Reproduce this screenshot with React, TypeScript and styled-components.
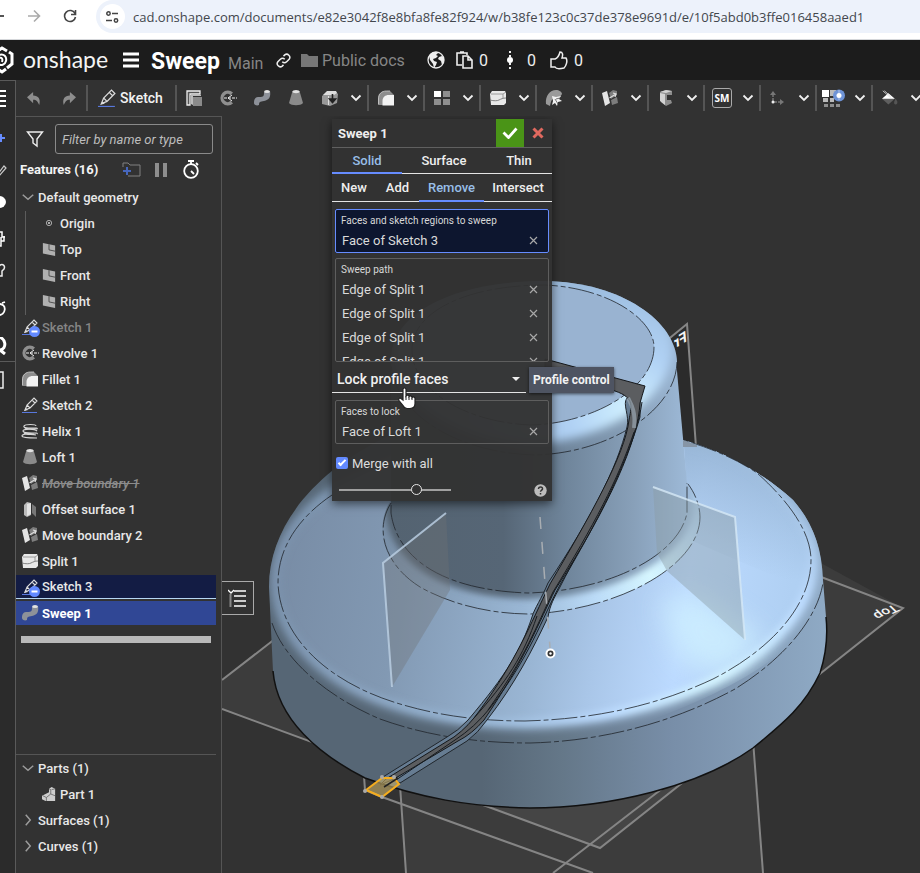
import React from "react";
import styled, { createGlobalStyle, css } from "styled-components";

const Global = createGlobalStyle`
  *, *::before, *::after { box-sizing: border-box; }
  html, body, #root { height: 100%; }
  body {
    margin: 0;
    background: #323232;
    color: #eee;
    font-family: Roboto, "Liberation Sans", sans-serif;
    font-size: 13px;
    overflow: hidden;
  }
  button, input, select { font: inherit; color: inherit; }
  button { background: none; border: 0; padding: 0; cursor: pointer; }
  ul { list-style: none; margin: 0; padding: 0; }
  svg { display: block; flex: none; }
`;

const Page = styled.div`
  display: flex;
  flex-direction: column;
  height: 100vh;
  overflow: hidden;
`;

/* ---------- browser bar ---------- */
const BrowserBar = styled.div`
  display: flex;
  align-items: flex-start;
  flex: none;
  height: 40px;
  background: #fff;
  border-bottom: 1px solid #d5d7da;
  color: #5b5d60;
`;
const BrowserNav = styled.nav`
  display: flex;
  align-items: center;
  flex: none;
  width: 96px;
  height: 32px;
  gap: 22px;
`;
const AddressPill = styled.div`
  display: flex;
  align-items: center;
  flex: 1;
  min-width: 0;
  height: 33px;
  padding-left: 4px;
  gap: 8px;
  background: #edf2fb;
  border-radius: 17px 0 0 17px;
`;
const SiteInfo = styled.button`
  display: grid;
  place-items: center;
  flex: none;
  width: 25px;
  height: 25px;
  border-radius: 50%;
  background: #fff;
`;
const Address = styled.input`
  flex: 1;
  min-width: 0;
  border: 0;
  padding: 0;
  background: none;
  outline: none;
  color: #43474d;
  font: 13px "Open Sans", "Noto Sans", sans-serif;
`;

/* ---------- document header ---------- */
const DocHeader = styled.header`
  display: flex;
  align-items: center;
  flex: none;
  height: 40px;
  background: #1c1c1c;
  white-space: nowrap;
`;
const Wordmark = styled.span`
  width: 100px;
  padding-left: 7px;
  font: 23px/30px Lato, sans-serif;
  height: 32px;
  color: #f4f4f4;
`;
const MenuButton = styled.button`
  display: flex;
  width: 28px;
`;
const DocTitle = styled.h1`
  width: 77px;
  margin: 0;
  padding-top: 3px;
  font-size: 23px;
  line-height: 28px;
  font-weight: 700;
  color: #fff;
`;
const HeaderLabel = styled.span<{ $w: number; $low?: boolean }>`
  width: ${(p) => p.$w}px;
  padding-top: ${(p) => (p.$low ? 7 : 2)}px;
  font-size: 16px;
  line-height: 24px;
  color: #868686;
`;
const HeaderIcon = styled.span<{ $w: number }>`
  display: flex;
  width: ${(p) => p.$w}px;
`;
const Count = styled.span<{ $w: number }>`
  width: ${(p) => p.$w}px;
  padding-top: 2px;
  font-size: 16px;
  line-height: 24px;
`;

/* ---------- body ---------- */
const Body = styled.div`
  display: flex;
  flex: 1;
  min-height: 0;
`;
const Rail = styled.nav`
  display: flex;
  flex-direction: column;
  flex: none;
  width: 16px;
  background: #2b2b2b;
  border-right: 1px solid #5a5a5a;
  border-top: 1px solid #5a5a5a;
`;
const RailItem = styled.button<{ $h: number; $line?: boolean }>`
  display: flex;
  align-items: center;
  justify-content: flex-start;
  width: 15px;
  height: ${(p) => p.$h}px;
  overflow: hidden;
  border-top: ${(p) => (p.$line ? "1px solid #5a5a5a" : "0")};
`;
const Workspace = styled.div`
  display: flex;
  flex-direction: column;
  flex: 1;
  min-width: 0;
`;
const Toolbar = styled.div`
  display: flex;
  flex: none;
  align-items: center;
  height: 36px;
  overflow: hidden;
`;
const ToolGroup = styled.div<{ $w: number; $first?: boolean }>`
  display: flex;
  align-items: center;
  flex: none;
  width: ${(p) => p.$w}px;
  height: 26px;
  border-left: ${(p) => (p.$first ? "0" : "2px solid #555")};
`;
const Tool = styled.button<{ $w: number }>`
  display: grid;
  place-items: center;
  flex: none;
  width: ${(p) => p.$w}px;
  height: 26px;
`;
const SketchButton = styled.button`
  display: flex;
  align-items: center;
  gap: 4px;
  padding-left: 10px;
  font-size: 14px;
  font-weight: 500;
  color: #f2f2f2;
`;
const SmBadge = styled.span`
  display: grid;
  place-items: center;
  width: 20px;
  height: 20px;
  border: 1px solid #aaa;
  border-radius: 3px;
  font: 700 10px/18px "Open Sans", sans-serif;
  color: #fff;
`;
const Main = styled.div`
  display: flex;
  flex: 1;
  min-height: 0;
`;

/* ---------- feature panel ---------- */
const FeaturePanel = styled.aside`
  display: flex;
  flex-direction: column;
  flex: none;
  width: 206px;
  border-top: 1px solid #555;
  border-right: 1px solid #555;
`;
const FilterRow = styled.div`
  display: flex;
  align-items: center;
  gap: 11px;
  padding: 7px 8px 0 10px;
`;
const FilterInput = styled.input`
  flex: 1;
  min-width: 0;
  height: 30px;
  padding: 0 6px;
  background: transparent;
  border: 1px solid #8a8a8a;
  border-radius: 3px;
  font-style: italic;
  &::placeholder { color: #bdbdbd; opacity: 1; }
`;
const PanelTitle = styled.div`
  display: flex;
  align-items: center;
  height: 31px;
  padding-left: 4px;
`;
const TitleText = styled.h2`
  width: 102px;
  margin: 0;
  font-size: 13px;
  line-height: 20px;
  font-weight: 700;
  color: #f4f4f4;
`;
const TitleAction = styled.button<{ $w: number }>`
  width: ${(p) => p.$w}px;
`;
const Row = styled.button<{ $level?: number; $tone?: "dim" | "struck" | "related" | "active" }>`
  display: flex;
  align-items: center;
  width: 200px;
  height: 24px;
  margin: 0 0 2px;
  gap: 4px;
  padding-left: ${(p) => (p.$level ?? 0) * 5 + 6}px;
  text-align: left;
  white-space: nowrap;
  font-weight: 500;
  color: #e8e8e8;
  ${(p) => p.$tone === "dim" && css`color: #858585;`}
  ${(p) => p.$tone === "struck" && css`color: #8c8c8c; font-style: italic; text-decoration: line-through;`}
  ${(p) => p.$tone === "related" && css`background: #131c44; border-bottom: 1px solid #b6d6f2;`}
  ${(p) => p.$tone === "active" && css`background: #304795; color: #fff; font-weight: 700;`}
`;
const Group = styled.ul`
  margin: 0 0 0 9px;
  border-left: 1px solid #5c5c5c;
`;
const RollbackBar = styled.div`
  height: 7px;
  margin: 9px 10px 0 5px;
  background: #b9b9b9;
`;
const PartsList = styled.ul`
  margin: auto 5px 13px 0;
  padding-top: 1px;
  border-top: 1px solid #555;
`;

/* ---------- viewport ---------- */
const Viewport = styled.main`
  position: relative;
  flex: 1;
  min-width: 0;
  overflow: hidden;
`;
const Scene = styled.svg`
  position: absolute;
  inset: 0;
  width: 100%;
  height: 100%;
`;
const ListToggle = styled.button`
  position: absolute;
  left: -1px;
  top: 465px;
  display: grid;
  place-items: center;
  width: 33px;
  height: 34px;
  background: #323232;
  border: 1px solid #aaa;
  border-left: 0;
`;
const Dialog = styled.section`
  position: absolute;
  left: 110px;
  top: 3px;
  width: 220px;
  background: rgba(50, 50, 50, 0.96);
  box-shadow: 0 3px 9px rgba(0, 0, 0, 0.55);
`;
const DialogHeader = styled.div`
  display: flex;
  align-items: center;
  height: 29px;
  padding-left: 6px;
  border-bottom: 1px solid #606060;
`;
const DialogTitle = styled.h2`
  flex: 1;
  margin: 0;
  font-size: 13px;
  font-weight: 700;
  color: #eee;
`;
const Confirm = styled.button`
  display: grid;
  place-items: center;
  width: 28px;
  height: 28px;
  background: #4a9417;
`;
const Cancel = styled(Confirm)`
  background: none;
`;
const Tabs = styled.div<{ $cols: string }>`
  display: grid;
  grid-template-columns: ${(p) => p.$cols};
  height: 26px;
  border-bottom: 1px solid #e4e4e4;
  & + & { height: 28px; }
`;
const Tab = styled.button<{ $on?: boolean }>`
  margin-bottom: -1px;
  font-weight: 500;
  color: ${(p) => (p.$on ? "#98bfe8" : "#eee")};
  border-bottom: 2px solid ${(p) => (p.$on ? "#668cff" : "transparent")};
`;
const Field = styled.fieldset<{ $on?: boolean; $h: number; $gap: number }>`
  height: ${(p) => p.$h}px;
  min-width: 0;
  margin: ${(p) => p.$gap}px 3px 0;
  padding: 5px 10px 0 5px;
  overflow: hidden;
  border: 1px solid ${(p) => (p.$on ? "#668cff" : "#5e5e5e")};
  border-radius: 2px;
  background: ${(p) => (p.$on ? "#0d162f" : "transparent")};
`;
const FieldLabel = styled.div`
  font-size: 10px;
  line-height: 12px;
  color: #d8d8d8;
`;
const Pick = styled.div`
  display: flex;
  align-items: center;
  justify-content: space-between;
  height: 24px;
  padding: 2px 0 0 1px;
  color: #dadada;
`;
const SelectRow = styled.label`
  display: flex;
  align-items: center;
  width: 194px;
  height: 27px;
  margin-top: 4px;
  padding-right: 6px;
  border-bottom: 1px solid #e4e4e4;
`;
const Select = styled.select`
  flex: 1;
  min-width: 0;
  padding: 0 0 0 5px;
  appearance: none;
  background: none;
  border: 0;
  outline: 0;
  font-size: 14px;
  font-weight: 500;
  color: #f0f0f0;
`;
const CheckRow = styled.label`
  display: flex;
  align-items: center;
  gap: 4px;
  height: 24px;
  margin-top: 7px;
  padding-left: 4px;
  color: #ddd;
`;
const Check = styled.input`
  display: grid;
  place-items: center;
  appearance: none;
  width: 12px;
  height: 12px;
  margin: 0;
  border-radius: 2px;
  background: #6289ff;
  &::after {
    content: "";
    width: 4px;
    height: 8px;
    margin-bottom: 2px;
    border: solid #fff;
    border-width: 0 2px 2px 0;
    transform: rotate(45deg);
  }
`;
const DialogFooter = styled.div`
  display: flex;
  align-items: center;
  justify-content: space-between;
  height: 22px;
  margin-top: 4px;
  padding: 0 5px 0 7px;
`;
const Slider = styled.input`
  appearance: none;
  width: 112px;
  height: 12px;
  margin: 0;
  background: none;
  &::-webkit-slider-runnable-track { height: 2px; background: #a0a0a0; }
  &::-webkit-slider-thumb {
    appearance: none;
    width: 11px;
    height: 11px;
    margin-top: -5px;
    border: 1px solid #e6e6e6;
    border-radius: 50%;
    background: #333;
  }
`;
const Tooltip = styled.div`
  position: absolute;
  left: 307px;
  top: 251px;
  padding: 4px;
  background: #4e5462;
  font-weight: 700;
  font-size: 12px;
  line-height: 18px;
  color: #f2f2f2;
  white-space: nowrap;
  box-shadow: 0 1px 3px rgba(0, 0, 0, 0.6);
`;
const Pointer = styled.svg`
  position: absolute;
  left: 176px;
  top: 271px;
`;

/* ---------- icons ---------- */
const shapes: Record<string, React.ReactNode> = {
  undo: <path d="M0 7 7 1v4c6 0 9 4 7 11-2-4-3-6-7-6v4z" fill="#8d8d8d" />,
  redo: <path d="M16 7 9 1v4C3 5 0 9 2 16c2-4 3-6 7-6v4z" fill="#8d8d8d" />,
  pencil: (
    <>
      <path d="M3 13 5 8 12 1l3 3-7 7zM5 8l3 3M10 3l3 3" fill="none" stroke="#ddd" strokeWidth="1.100" />
      <path d="m2 14 2-3 2 2z" fill="#ddd" />
      <path d="M0 15.500h15" stroke="#5878dd" />
    </>
  ),
  extrude: (
    <>
      <path d="M1 15V1h13v3H4v11z" fill="#555" stroke="#eee" strokeWidth="1.300" />
      <path d="M5 14V5h10v1H7v9z" fill="#bbb" />
      <path d="M7 7h9v9H7z" fill="#8a8a8a" />
    </>
  ),
  revolve: (
    <>
      <path d="M13 2.500A7.500 7.500 0 1 0 13 13.500L10.500 10.800A4 4 0 1 1 10.500 5.200z" fill="#8f8f8f" />
      <path d="M4 8h13" stroke="#eee" strokeWidth="1.200" strokeDasharray="3 1" />
      <path d="M8 8l4-3M8 8l4 3" stroke="#eee" />
    </>
  ),
  sweep: (
    <>
      <path d="M0 13c0-5 2-6 5-6 5 0 5-1 5-5l6-1c1 6-1 9-6 10-4 .5-5 1-5 4-2 1-5 0-5-2z" fill="#8d9199" />
      <ellipse cx="13" cy="1.600" rx="2.900" ry="1.500" fill="#e2e2e2" />
    </>
  ),
  loft: (
    <>
      <path d="M4.500 1h7L15 13c-2 3-12 3-14 0z" fill="#8a8a8a" />
      <ellipse cx="8" cy="1.600" rx="3.500" ry="1.600" fill="#e2e2e2" />
    </>
  ),
  thicken: (
    <>
      <path d="M0 6 5 2h9l2 2-1 9-7 3-8-2z" fill="#989898" />
      <path d="M1 5 5 1h9l1 2-3 2z" fill="#ddd" />
      <path d="M6.500 6v9" stroke="#ddd" />
      <path d="M10.500 4v7M7.500 9l3 3.500 3-3.500z" fill="#222" stroke="#222" strokeWidth="1.600" />
    </>
  ),
  fillet: (
    <>
      <path d="M0 15V9c0-5 3-8 8-8h4l4 4v10z" fill="#8d8d8d" />
      <path d="M4.500 15.500V11c0-4 3-6 6-6H16v10.500z" fill="#f2f2f2" />
      <path d="M.5 14V9c0-5 3-8 8-8H12" fill="none" stroke="#ccc" strokeWidth=".8" />
    </>
  ),
  pattern: (
    <>
      <path d="M0 1h7v6H0z" fill="#fff" />
      <path d="M9 1h7v6H9zM0 9h7v6H0zM9 9h7v6H9z" fill="#8e8e8e" />
    </>
  ),
  split: (
    <>
      <path d="M0 4 2 1h13l1 2v10l-2 2H1z" fill="#e8e8e8" />
      <path d="M1 4h12l3-2M13 4v4" fill="none" stroke="#888" strokeWidth=".8" />
      <path d="M0 10c4 1 7 1 9 0s4-2 7-2" fill="none" stroke="#777" strokeWidth=".9" />
    </>
  ),
  surface: (
    <>
      <path d="M0 14C-1 6 4 0 10 0c3 0 6 2 6 4l-2 3-5 1c-3 0-4 3-5 8z" fill="#9a9a9a" />
      <path d="m6 6 4 1 5-1-2 3 3 2-4 1-1 4-2-3-3 2 1-4z" fill="#f2f2f2" />
      <path d="m9 9 3 5M10 9l4-1" stroke="#555" strokeWidth=".8" />
    </>
  ),
  boundary: (
    <>
      <path d="M0 3 5 1l3 12-5 3z" fill="#e4e4e4" />
      <path d="m7 3 4-3 4 1v4l-6 4zM9 10l6-3 1 6-6 2z" fill="#7d7d7d" />
      <path d="M7.500 8 14 4M11 3l3 1-1 3" fill="none" stroke="#ddd" strokeWidth="1.200" />
    </>
  ),
  frame: (
    <>
      <path d="m2 2 6-2 6 1v4H9v5h4l1 3-6 3-5-4z" fill="#8d8d8d" />
      <path d="m2 2 6-2 6 1-6 2zM2 3l5 1v11l-5-4z" fill="#d2d2d2" />
    </>
  ),
  axes: (
    <>
      <path d="M3 12V4M3 12h8" stroke="#777" strokeWidth="1.500" strokeDasharray="4 1" />
      <path d="m0 5 3-4 3 4zM10 9l4 3-4 3z" fill="#777" />
      <circle cx="3" cy="12" r="1.500" fill="#eee" />
    </>
  ),
  custom: (
    <>
      <path d="M0 1h7v7H0z" fill="#fff" />
      <path d="M8 1h6v6H8zM1 9h5v4H1zM8 9h4v4H8z" fill="#bbb" />
      <path d="M2 15h4v3H2zM8 15h4v3H8zM14 15h4v3h-4z" fill="#8e8e8e" />
      <circle cx="17" cy="6.500" r="6" fill="#6e93d6" />
      <path d="M17 1.500v10" stroke="#fff" strokeDasharray="1 1" />
      <circle cx="17" cy="6.500" r="2.500" fill="#fff" />
    </>
  ),
  bucket: (
    <>
      <path d="m8 3 8 7-8 7-8-7z" fill="#5f5f5f" />
      <path d="m8 3 8 7H0z" fill="#fff" />
      <path d="m1 0 10 9M3 0l8 7" stroke="#ddd" strokeWidth="1" />
      <path d="M17 10c3 3 3 7 0 7s-2-4 0-7z" fill="#555" />
    </>
  ),
  plane: (
    <>
      <path d="m1 1 14 3v12L1 13z" fill="#b0b0b0" />
      <path d="M8 2.500V9l7 1.500" fill="none" stroke="#444" />
    </>
  ),
  origin: (
    <>
      <circle cx="8" cy="8" r="3" fill="none" stroke="#bbb" />
      <circle cx="8" cy="8" r="1.200" fill="#ccc" />
    </>
  ),
  helix: (
    <g fill="none" stroke="#d8d8d8" strokeWidth="1.200">
      <path d="M14 3C14 1 3 1 2 3s4 2 8 2 6 0 5 1" />
      <path d="M15 8C12 5 1 6 1 8s5 2 9 2 6 0 5 1" />
      <path d="M12 11C8 10 0 11 0 13s8 2 15 2" />
      <path d="M3 5c2 2 10 0 12 1M2 10c2 2 8 1 12 2" />
    </g>
  ),
  offset: (
    <>
      <path d="M2 4 5 1l4 1v12l-4 2-3-2z" fill="#bbb" />
      <path d="M5 3v12l4-2V2z" fill="#e4e4e4" />
      <path d="m10 3 4 3v10l-4-4z" fill="#777" />
    </>
  ),
  part: (
    <>
      <path d="M0 10 8 6V2l3-2 4 2v14H4l-4-2z" fill="#ccc" />
      <path d="m1 10 4 2 5-4V3L8 2M5 12v4M11 3l4-1M10 8l5 2" fill="none" stroke="#555" strokeWidth=".8" />
    </>
  ),
  down: <path d="m1 5 7 6 7-6" fill="none" stroke="#9c9c9c" strokeWidth="2" />,
  right: <path d="m5 1 6 7-6 7" fill="none" stroke="#9c9c9c" strokeWidth="2" />,
};

function Icon({ name, size = 16, hidden }: { name: string; size?: number; hidden?: boolean }) {
  const box = name === "custom" ? "0 0 24 18" : name === "bucket" ? "0 0 20 18" : "0 0 16 16";
  const width = name === "custom" ? 24 : size;
  return (
    <svg width={width} height={size} viewBox={box} overflow="visible" aria-hidden="true">
      {shapes[name]}
      {hidden && (
        <>
          <circle cx="12.500" cy="12.500" r="5.500" fill="#6289ff" />
          <path d="M9.500 12.500h6" stroke="#fff" strokeWidth="2" />
        </>
      )}
    </svg>
  );
}

const Chevron = () => (
  <svg width="12" height="8" viewBox="0 0 12 8" aria-hidden="true">
    <path d="m1.500 1.500 4.500 4.500 4.500-4.500" fill="none" stroke="#f0f0f0" strokeWidth="1.800" />
  </svg>
);

const Cross = () => (
  <svg width="9" height="9" viewBox="0 0 9 9" aria-hidden="true">
    <path d="m1 1 7 7M8 1 1 8" stroke="#a8a8a8" strokeWidth="1.200" />
  </svg>
);

function PickItem({ children }: { children: string }) {
  return (
    <Pick>
      {children}
      <button aria-label={`Clear ${children}`}><Cross /></button>
    </Pick>
  );
}

/* ---------- model drawing ---------- */
const baseOutline =
  "M269 587C269 480 410 400 549 400C600 405 640 425 683 440C730 453 766 476 793 500C812 522 822 546 823 580L826 617Q829 645 820 673C805 705 785 722 753 748C700 786 610 808 530 808C470 807 420 798 365 778C320 755 277 720 273 671L271 630Z";
const topOutline =
  "M269 587C269 480 410 400 549 400C600 405 640 425 683 440C730 453 766 476 793 500C812 522 822 546 823 583C817 640 752 686 623 730C590 740 560 743 530 743C440 743 370 722 320 687C291 665 275 645 271 623Z";
const coneEdge =
  "M332 495C298 518 278 548 278 583C280 640 332 684 400 704C440 716 480 721 525 721C600 719 660 704 713 679C770 650 811 606 811 560C811 535 793 505 757 473C735 458 710 448 683 440";
const skirtEdge = "M272 623C285 662 330 698 380 719C430 737 480 743 530 743C610 741 680 719 735 689C782 660 817 620 823 583";
const neck = "M391 360V513C397 557 440 590 528 593C610 591 679 555 687 513V483L676 360Z";
const neckEdge = "M391 505V513C397 557 440 590 528 593C610 591 679 555 687 513V483";
const filletShape = "M391 500C372 530 385 565 420 587C450 604 490 614 530 614C620 610 700 565 700 517C699 505 695 493 687 483V513Q680 560 530 593Q400 580 391 513Z";
const filletEdge = "M391 503C374 530 385 565 420 587C450 604 490 614 530 614C620 610 700 565 700 517C700 506 695 493 688 484";
const cap = "M391 360C391 310 460 281 545 281C622 282 676 322 677 362C676 410 610 453 535 455C455 453 391 412 391 360Z";
const capInner = "M412 350C412 310 470 285 545 285C610 288 654 320 654 347C654 390 590 424 530 425C465 422 412 390 412 350Z";

const EDGE = { fill: "none", stroke: "#20262c", strokeWidth: 1, strokeDasharray: "26 3 5 3", opacity: 0.8 };

function Model() {
  return (
    <Scene viewBox="222 116 698 757" preserveAspectRatio="xMinYMin slice" role="img" aria-label="Swept part">
      <defs>
        <linearGradient id="skirt" gradientUnits="userSpaceOnUse" x1="270" y1="0" x2="828" y2="0">
          <stop offset="0" stopColor="#566675" />
          <stop offset=".38" stopColor="#566675" />
          <stop offset=".52" stopColor="#647788" />
          <stop offset=".72" stopColor="#788ea8" />
          <stop offset="1" stopColor="#8faac5" />
        </linearGradient>
        <linearGradient id="cone" gradientUnits="userSpaceOnUse" x1="280" y1="520" x2="790" y2="600">
          <stop offset="0" stopColor="#788ca5" />
          <stop offset=".25" stopColor="#8299b3" />
          <stop offset=".52" stopColor="#99b5d3" />
          <stop offset=".64" stopColor="#a9c6e8" />
          <stop offset=".8" stopColor="#bcdaff" />
          <stop offset="1" stopColor="#b0d0f3" />
        </linearGradient>
        <linearGradient id="coneTop" gradientUnits="userSpaceOnUse" x1="740" y1="430" x2="720" y2="570">
          <stop offset="0" stopColor="#94b2d2" />
          <stop offset="1" stopColor="#94b2d2" stopOpacity="0" />
        </linearGradient>
        <linearGradient id="neckFill" gradientUnits="userSpaceOnUse" x1="391" y1="0" x2="687" y2="0">
          <stop offset="0" stopColor="#546371" />
          <stop offset=".38" stopColor="#566676" />
          <stop offset=".6" stopColor="#70869c" />
          <stop offset=".82" stopColor="#88a0b9" />
          <stop offset="1" stopColor="#9db9d7" />
        </linearGradient>
        <radialGradient id="roll" gradientUnits="userSpaceOnUse" cx="650" cy="575" r="290">
          <stop offset="0" stopColor="#d6f6ff" />
          <stop offset=".2" stopColor="#bcdcf8" />
          <stop offset=".45" stopColor="#9ab7d5" />
          <stop offset="1" stopColor="#7489a0" />
        </radialGradient>
        <radialGradient id="rim" gradientUnits="userSpaceOnUse" cx="715" cy="675" r="450">
          <stop offset="0" stopColor="#d4f4ff" />
          <stop offset=".25" stopColor="#bddcff" />
          <stop offset=".5" stopColor="#9bb9d8" />
          <stop offset="1" stopColor="#7b92ac" />
        </radialGradient>
        <radialGradient id="capRim" gradientUnits="userSpaceOnUse" cx="628" cy="410" r="170">
          <stop offset="0" stopColor="#d0f0ff" />
          <stop offset=".35" stopColor="#b0d1f4" />
          <stop offset=".75" stopColor="#9dbddf" />
          <stop offset="1" stopColor="#93afcd" />
        </radialGradient>
        <filter id="soft3" x="-20%" y="-20%" width="140%" height="140%"><feGaussianBlur stdDeviation="3" /></filter>
        <filter id="soft5" x="-20%" y="-20%" width="140%" height="140%"><feGaussianBlur stdDeviation="5" /></filter>
        <filter id="soft14" x="-50%" y="-50%" width="200%" height="200%"><feGaussianBlur stdDeviation="14" /></filter>
        <clipPath id="topClip"><path d={topOutline} /></clipPath>
        <clipPath id="filletClip"><path d={filletShape} /></clipPath>
        <clipPath id="capClip"><path d={cap} /></clipPath>
      </defs>

      <g fill="#fff" fillOpacity=".05">
        <path d="M222 680 560 420 903 608 600 848 222 709Z" />
        <path d="M400 780V792L406 873H763L753 740Z" />
        <path d="M670 338 687 324 696 447H640Z" fill="#000" fillOpacity=".12" />
      </g>
      <g fill="none" stroke="#858585" strokeWidth="2">
        <path d="M222 680 280 635M222 709 600 848 903 608 800 569" />
        <path d="M400 785 406 873M753 740 763 873M382 797 593 873M553 873 672 781M364 776 365 790 382 797" />
        <path d="M660 346 687 324 696 447" />
      </g>
      <text transform="matrix(-.9 .55 .1 1 687 341)" fill="#f4f4f4" fontSize="15" fontWeight="700" fontFamily="Roboto">Fr</text>
      <text transform="matrix(-.87 .4 -.6 -.6 894 604)" fill="#f4f4f4" fontSize="15" fontWeight="500" fontFamily="Roboto">Top</text>

      <path d={baseOutline} fill="url(#skirt)" />
      <path d="M273 671C277 720 320 755 365 778C420 798 470 807 530 808C610 808 700 786 753 748C785 722 805 705 820 673Q829 645 826 617" fill="none" stroke="#111" strokeWidth="1.500" />
      <g clipPath="url(#topClip)">
        <path d={coneEdge + "L549 395Z"} fill="url(#rim)" stroke="url(#rim)" strokeWidth="16" filter="url(#soft5)" />
        <path d={coneEdge + "L549 380Z"} fill="url(#cone)" />
        <path d="M683 430 830 430V600L690 540Z" fill="url(#coneTop)" />
        <path d="M660 600 700 595 765 640 725 675 680 660Z" fill="#d0f2ff" opacity=".75" filter="url(#soft14)" />
        <path d={coneEdge} fill="none" stroke="url(#rim)" strokeWidth="6" filter="url(#soft3)" />
      </g>
      <path d={coneEdge} {...EDGE} />
      <path d={skirtEdge} {...EDGE} />

      <path d={filletShape} fill="url(#roll)" />
      <path d={neck} fill="url(#neckFill)" />
      <g clipPath="url(#filletClip)">
        <path d={neckEdge} fill="none" stroke="url(#neckFill)" strokeWidth="12" filter="url(#soft3)" />
      </g>
      <path d={filletEdge} {...EDGE} />
      <path d={neckEdge} {...EDGE} />

      <path d={cap} fill="url(#neckFill)" />
      <g clipPath="url(#capClip)">
        <path d={capInner} fill="url(#capRim)" stroke="url(#capRim)" strokeWidth="38" filter="url(#soft5)" />
        <path d={capInner} fill="#99b3d1" />
      </g>
      <path d={capInner} {...EDGE} />
      <path d="M677 362C676 410 610 453 535 455C455 453 391 412 391 360" {...EDGE} />

      <path d="M653 487 735 517 745 640 667 571 657 553Z" fill="#8b9aa2" fillOpacity=".42" />
      <path d="M653 487 735 517 745 640" fill="none" stroke="#d6e8f6" strokeOpacity=".8" strokeWidth="2" />
      <path d="M446 513 383 563 392 687 450 590Z" fill="#6f7175" fillOpacity=".36" />
      <path d="M446 513 383 563 392 687" fill="none" stroke="#b9cde0" strokeOpacity=".85" strokeWidth="2" />
      <path d="M683 440 697 445V447H683Z" fill="#8695a6" />

      <path d="M627 398C622 404 630 416 627 427C617 468 592 517 548 583C541 600 535 607 532 617C521 650 507 674 468 720Q458 731 447 737L383 777 400 783 467 741Q478 733 487 720C515 684 533 649 548 617C550 605 554 598 560 587C588 532 625 470 640 417V398Z" fill="#667c92" stroke="#20262c" />
      <path d="M545 359 645 386Q642 396 640 403C638 441 610 505 555 590C540 620 525 660 484 720Q472 734 458 741L394 779 380 785 386 779 454 737Q469 726 480 710C516 661 530 625 550 584C590 516 625 455 629 420C631 408 636 398 615 391L545 372Z" fill="#5b5d60" stroke="#15181b" />
      <path d="M642 402C637 441 604 512 561 583C541 620 530 657 490 708Q475 727 455 740L396 780M634 432C618 480 594 525 553 592C536 627 526 656 488 710M537 616C523 657 507 681 474 718" fill="none" stroke="#171c21" strokeWidth="1" />
      <path d="M628 398C631 404 636 411 634 428" fill="none" stroke="#99a7b2" strokeWidth="4" opacity=".7" />

      <path d="M540 517 550 648" stroke="#a8adb2" strokeWidth="1.500" strokeDasharray="12 13" />
      <circle cx="550.500" cy="653.500" r="4" fill="#333" stroke="#fff" strokeWidth="2" />
      <circle cx="550.500" cy="653.500" r="1.200" fill="#fff" />
      <path d="M366 790 382 778H394L399 784 382 797Z" fill="#cbb26a" fillOpacity=".6" stroke="#f5ad1e" strokeWidth="2" />
      <path d="m384 787 14-9" stroke="#222" strokeWidth="1.500" />
      <g fill="#aaa"><circle cx="365" cy="791" r="2" /><circle cx="382" cy="777" r="2" /><circle cx="394" cy="777" r="2" /><circle cx="382" cy="797" r="2" /></g>
    </Scene>
  );
}

const geometry: [string, string][] = [["Origin", "origin"], ["Top", "plane"], ["Front", "plane"], ["Right", "plane"]];

type Feature = { name: string; icon: string; tone?: "dim" | "struck" | "related" | "active"; hidden?: boolean };
const features: Feature[] = [
  { name: "Sketch 1", icon: "pencil", tone: "dim", hidden: true },
  { name: "Revolve 1", icon: "revolve" },
  { name: "Fillet 1", icon: "fillet" },
  { name: "Sketch 2", icon: "pencil" },
  { name: "Helix 1", icon: "helix" },
  { name: "Loft 1", icon: "loft" },
  { name: "Move boundary 1", icon: "boundary", tone: "struck" },
  { name: "Offset surface 1", icon: "offset" },
  { name: "Move boundary 2", icon: "boundary" },
  { name: "Split 1", icon: "split" },
  { name: "Sketch 3", icon: "pencil", tone: "related", hidden: true },
  { name: "Sweep 1", icon: "sweep", tone: "active" },
];

const railItems: { label: string; h: number; line?: boolean; art: React.ReactNode }[] = [
  { label: "Tab list", h: 35, art: <path d="M-4 1H6M-4 6H6M-4 11H6M-4 16H6" stroke="#fff" strokeWidth="2" /> },
  { label: "Insert", h: 44, art: <path d="M-3 9H5M1 5v8" stroke="#668cff" strokeWidth="2" /> },
  { label: "Edit", h: 20, art: <path d="m-2 13 6-8 2 2-7 8" fill="none" stroke="#ccc" strokeWidth="1.200" /> },
  { label: "Appearance", h: 44, art: <ellipse cx="-1" cy="9" rx="7" ry="6" fill="#fff" /> },
  { label: "Configure", h: 30, art: <path d="M-2 2h4v5h3M1 7v9h-3M1 11h3V6" fill="none" stroke="#fff" strokeWidth="1.500" /> },
  { label: "Help", h: 34, art: <path d="M-2 6C1 0 6 3 4 7L2 9v3M-2 14h4V9" fill="none" stroke="#eee" strokeWidth="1.500" /> },
  { label: "History", h: 42, art: <path d="M-2 4C8 3 6 16-2 15M2 3l3-1" fill="none" stroke="#fff" strokeWidth="1.800" /> },
  { label: "Comments", h: 31, art: <path d="M-4 0C7-1 7 13 0 13L5 17" fill="none" stroke="#fff" strokeWidth="3" /> },
  { label: "Notes", h: 36, line: true, art: <path d="M-4 1H3V17H-4M-4 5H0M-4 9H0M-4 13H0" fill="none" stroke="#eee" strokeWidth="1.500" /> },
];

const laterTools = ["fillet", "pattern", "split", "surface", "boundary", "frame", "sm", "axes", "custom", "bucket"];

export default function App() {
  return (
    <Page>
      <Global />
      <BrowserBar>
        <BrowserNav aria-label="Browser">
          <button aria-label="Back"><svg width="5" height="16"><path d="M0 8h4" stroke="#555" strokeWidth="2" /></svg></button>
          <button aria-label="Forward">
            <svg width="14" height="14" viewBox="0 0 14 14"><path d="M1 7h11M7 1.500 12.500 7 7 12.500" fill="none" stroke="#aaa" strokeWidth="1.600" /></svg>
          </button>
          <button aria-label="Reload">
            <svg width="14" height="14" viewBox="0 0 14 14"><path d="M12 4.500A5.500 5.500 0 1 0 12.500 8M12.500 1v4.500H8" fill="none" stroke="#444" strokeWidth="1.600" /></svg>
          </button>
        </BrowserNav>
        <AddressPill>
          <SiteInfo aria-label="Site information">
            <svg width="13" height="12" viewBox="0 0 13 12" fill="none" stroke="#444" strokeWidth="1.500">
              <circle cx="2.500" cy="2.500" r="1.700" /><path d="M6 2.500h6M0 9.500h6" /><circle cx="10" cy="9.500" r="1.700" />
            </svg>
          </SiteInfo>
          <Address aria-label="Address" readOnly value="cad.onshape.com/documents/e82e3042f8e8bfa8fe82f924/w/b38fe123c0c37de378e9691d/e/10f5abd0b3ffe016458aaed1" />
        </AddressPill>
      </BrowserBar>

      <DocHeader>
        <HeaderIcon $w={16}>
          <svg width="16" height="28" viewBox="0 0 16 28" fill="none" stroke="#fff" strokeWidth="3">
            <path d="m-1 4 3-2 5 3M9 6l3 2v10l-5 4M6 23l-4 3-3-2" />
            <path d="M-1 9c5-2 8 2 7 6s-5 5-8 3M-1 12c3-1 4 1 3 4" strokeWidth="2" />
          </svg>
        </HeaderIcon>
        <Wordmark>onshape</Wordmark>
        <HeaderIcon $w={7} />
        <MenuButton aria-label="Document menu">
          <svg width="16" height="16"><path d="M0 2h16M0 8h16M0 14h16" stroke="#fff" strokeWidth="3" /></svg>
        </MenuButton>
        <DocTitle>Sweep</DocTitle>
        <HeaderLabel $w={48} $low>Main</HeaderLabel>
        <HeaderIcon $w={25}>
          <svg width="15" height="15" viewBox="0 0 24 24" fill="none" stroke="#eee" strokeWidth="2.400">
            <path d="M10 14a5 5 0 0 0 7 0l4-4a5 5 0 0 0-7-7l-2 2M14 10a5 5 0 0 0-7 0l-4 4a5 5 0 0 0 7 7l2-2" />
          </svg>
        </HeaderIcon>
        <HeaderIcon $w={21}>
          <svg width="17" height="14"><path d="M0 1h6l2 2h9v11H0z" fill="#777" /></svg>
        </HeaderIcon>
        <HeaderLabel $w={105}>Public docs</HeaderLabel>
        <HeaderIcon $w={29}>
          <svg width="18" height="18" viewBox="0 0 18 18">
            <circle cx="9" cy="9" r="8" fill="none" stroke="#eee" strokeWidth="1.300" />
            <path d="M2 5C4 1 7 1 9 1l2 1-2 2 2 1-2 2-3 1 1 2 3 1-1 3-2 3-1-4-3-4zM13 2l4 5v4l-2 3-1-4-3-2 1-2 3-1z" fill="#eee" />
          </svg>
        </HeaderIcon>
        <HeaderIcon $w={23}>
          <svg width="17" height="18" viewBox="0 0 17 18" fill="none" stroke="#eee" strokeWidth="1.600">
            <path d="M6 14H1V2h10v2M4 1h4M7 5h5l4 4v8H7zM12 5v4h4" />
          </svg>
        </HeaderIcon>
        <Count $w={28}>0</Count>
        <HeaderIcon $w={20}>
          <svg width="6" height="18"><path d="M3 0v18" stroke="#eee" strokeWidth="2" strokeDasharray="2 2" /><circle cx="3" cy="9" r="3" fill="#fff" /></svg>
        </HeaderIcon>
        <Count $w={23}>0</Count>
        <HeaderIcon $w={24}>
          <svg width="18" height="19" viewBox="0 0 18 19" fill="none" stroke="#eee" strokeWidth="1.500">
            <path d="M1 8h4c3-1 4-3 5-7 3 0 3 3 2 6h4c2 3 0 8-2 10-4 1-8 1-9-1H1z" />
          </svg>
        </HeaderIcon>
        <Count $w={20}>0</Count>
      </DocHeader>

      <Body>
        <Rail aria-label="Side tools">
          {railItems.map((r) => (
            <RailItem key={r.label} $h={r.h} $line={r.line} aria-label={r.label}>
              <svg width="15" height="18" viewBox="0 0 15 18">{r.art}</svg>
            </RailItem>
          ))}
        </Rail>
        <Workspace>
          <Toolbar role="toolbar">
            <ToolGroup $w={70} $first>
              <Tool $w={35} aria-label="Undo"><Icon name="undo" size={14} /></Tool>
              <Tool $w={35} aria-label="Redo"><Icon name="redo" size={14} /></Tool>
            </ToolGroup>
            <ToolGroup $w={89}>
              <SketchButton><Icon name="pencil" size={18} />Sketch</SketchButton>
            </ToolGroup>
            <ToolGroup $w={192}>
              {["extrude", "revolve", "sweep", "loft", "thicken"].map((n) => (
                <Tool key={n} $w={34} aria-label={n}><Icon name={n} /></Tool>
              ))}
              <Tool $w={17} aria-label="More solid tools"><Chevron /></Tool>
            </ToolGroup>
            {laterTools.map((n) => (
              <ToolGroup $w={56} key={n}>
                <Tool $w={34} aria-label={n}>{n === "sm" ? <SmBadge>SM</SmBadge> : <Icon name={n} size={n === "custom" ? 18 : 16} />}</Tool>
                <Tool $w={17} aria-label={`More ${n} tools`}><Chevron /></Tool>
              </ToolGroup>
            ))}
          </Toolbar>

          <Main>
            <FeaturePanel>
              <FilterRow>
                <svg width="18" height="18" viewBox="0 0 18 18"><path d="M1.500 2h15l-5.500 7v7l-4-3V9z" fill="none" stroke="#eee" strokeWidth="1.400" /></svg>
                <FilterInput aria-label="Filter features" placeholder="Filter by name or type" />
              </FilterRow>
              <PanelTitle>
                <TitleText>Features (16)</TitleText>
                <TitleAction $w={33} aria-label="Add folder">
                  <svg width="19" height="15" viewBox="0 0 19 15" fill="none">
                    <path d="M1 5V1h5l2 2h10v11H6" stroke="#808080" /><path d="M1 9h8M5 5v8" stroke="#4767bd" strokeWidth="2" />
                  </svg>
                </TitleAction>
                <TitleAction $w={27} aria-label="Pause">
                  <svg width="12" height="14"><path d="M2 0v14M10 0v14" stroke="#8e8e8e" strokeWidth="4" /></svg>
                </TitleAction>
                <TitleAction $w={18} aria-label="Regeneration times">
                  <svg width="18" height="19" viewBox="0 0 18 19" fill="none" stroke="#fff" strokeWidth="1.800">
                    <circle cx="9" cy="11" r="6.800" /><path d="M6 1h6M9 1v3M14 3l2 2M9 11l3 3" />
                  </svg>
                </TitleAction>
              </PanelTitle>
              <Row as="div"><Icon name="down" size={12} />Default geometry</Row>
              <Group>
                {geometry.map(([n, i]) => (
                  <li key={n}><Row $level={2}><Icon name={i} size={14} />{n}</Row></li>
                ))}
              </Group>
              <ul>
                {features.map((f) => (
                  <li key={f.name}>
                    <Row $tone={f.tone}><Icon name={f.icon} hidden={f.hidden} />{f.name}</Row>
                  </li>
                ))}
              </ul>
              <RollbackBar />
              <PartsList>
                <li><Row><Icon name="down" size={12} />Parts (1)</Row></li>
                <li><Row $level={4}><Icon name="part" size={14} />Part 1</Row></li>
                <li><Row><Icon name="right" size={12} />Surfaces (1)</Row></li>
                <li><Row><Icon name="right" size={12} />Curves (1)</Row></li>
              </PartsList>
            </FeaturePanel>

            <Viewport>
              <Model />
              <ListToggle aria-label="Show feature list">
                <svg width="18" height="18" viewBox="0 0 18 18" fill="none" stroke="#fff">
                  <path d="m0 1 3 3 3-3M6 2h12M6 7h12M6 12h12M6 17h12" strokeWidth="1.300" /><path d="M2.500 5v13" stroke="#888" strokeWidth="2" />
                </svg>
              </ListToggle>
              <Dialog aria-label="Sweep 1">
                <DialogHeader>
                  <DialogTitle>Sweep 1</DialogTitle>
                  <Confirm aria-label="Accept">
                    <svg width="16" height="12" viewBox="0 0 16 12"><path d="m1.500 5.500 5 5 8-9" fill="none" stroke="#fff" strokeWidth="2.800" /></svg>
                  </Confirm>
                  <Cancel aria-label="Cancel">
                    <svg width="12" height="12" viewBox="0 0 12 12"><path d="m1.500 1.500 9 9M10.500 1.500l-9 9" stroke="#e0695f" strokeWidth="3" /></svg>
                  </Cancel>
                </DialogHeader>
                <Tabs $cols="70fr 84fr 66fr" role="tablist">
                  <Tab $on role="tab" aria-selected>Solid</Tab>
                  <Tab role="tab">Surface</Tab>
                  <Tab role="tab">Thin</Tab>
                </Tabs>
                <Tabs $cols="44fr 43fr 65fr 68fr" role="tablist">
                  <Tab role="tab">New</Tab>
                  <Tab role="tab">Add</Tab>
                  <Tab $on role="tab" aria-selected>Remove</Tab>
                  <Tab role="tab">Intersect</Tab>
                </Tabs>
                <Field $on $h={44} $gap={7} aria-label="Faces and sketch regions to sweep">
                  <FieldLabel>Faces and sketch regions to sweep</FieldLabel>
                  <PickItem>Face of Sketch 3</PickItem>
                </Field>
                <Field $h={104} $gap={5} aria-label="Sweep path">
                  <FieldLabel>Sweep path</FieldLabel>
                  <PickItem>Edge of Split 1</PickItem>
                  <PickItem>Edge of Split 1</PickItem>
                  <PickItem>Edge of Split 1</PickItem>
                  <PickItem>Edge of Split 1</PickItem>
                </Field>
                <SelectRow>
                  <Select aria-label="Profile control"><option>Lock profile faces</option></Select>
                  <svg width="8" height="4"><path d="M0 0h8L4 4z" fill="#eee" /></svg>
                </SelectRow>
                <Field $h={44} $gap={7} aria-label="Faces to lock">
                  <FieldLabel>Faces to lock</FieldLabel>
                  <PickItem>Face of Loft 1</PickItem>
                </Field>
                <CheckRow><Check type="checkbox" defaultChecked />Merge with all</CheckRow>
                <DialogFooter>
                  <Slider type="range" aria-label="Preview opacity" min={0} max={100} defaultValue={71} />
                  <button aria-label="Help">
                    <svg width="13" height="13" viewBox="0 0 13 13">
                      <circle cx="6.500" cy="6.500" r="6.200" fill="#bdbdbd" />
                      <path d="M4.500 5c0-3 4.500-2.600 4 0-.2 1-2 1.300-2 2.800M6.500 9v1.600" fill="none" stroke="#333" strokeWidth="1.500" />
                    </svg>
                  </button>
                </DialogFooter>
              </Dialog>
              <Tooltip role="tooltip">Profile control</Tooltip>
              <Pointer width="18" height="24" viewBox="0 0 18 24" aria-hidden="true">
                <path d="M5 13V2.500C5 .5 8 .5 8 2.500V9c1-1.500 3-1 3 .5 1-1 3-.5 3 1 1-1 3-.5 3 1v5c0 3-2 5-5 5H9c-2 0-3-1-4-3l-4-5c-1-2 1-3 2-2z" fill="#fff" stroke="#222" strokeWidth="1.200" />
                <path d="M8 9v4M11 10v3M14 11v2" stroke="#222" />
              </Pointer>
            </Viewport>
          </Main>
        </Workspace>
      </Body>
    </Page>
  );
}
